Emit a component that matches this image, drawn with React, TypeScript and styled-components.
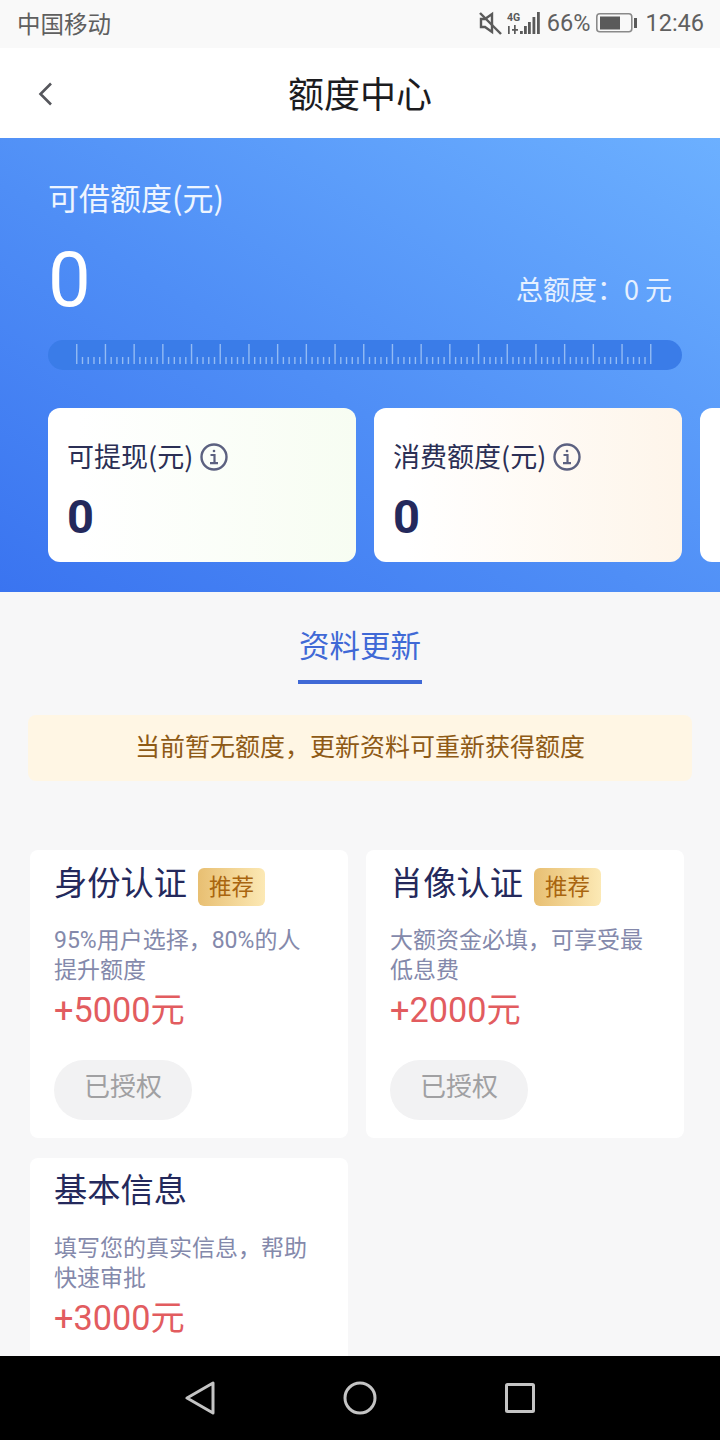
import React from "react";
import styled, { createGlobalStyle } from "styled-components";

const Global = createGlobalStyle`
  html, body { margin: 0; padding: 0; background: #f7f7f8; }
  body { font-family: "Noto Sans CJK SC", "Noto Sans", sans-serif; }
  * { box-sizing: border-box; }
`;
const Screen = styled.div`
  width: 720px; height: 1440px; display: flex; flex-direction: column; overflow: hidden; background: #f7f7f8;
`;
const StatusBar = styled.div`
  height: 48px; flex: none; display: flex; align-items: center; justify-content: space-between;
  padding: 0 16px 2px 17px; background: #f9f9f9; color: #5f5f5f; font-size: 23.5px;
`;
const StatusRight = styled.div`
  display: flex; align-items: center; font-family: Roboto, sans-serif; font-size: 23.5px; color: #606060;
`;
const Percent = styled.span` margin: 0 6px 0 4px; `;
const Header = styled.header`
  height: 90px; flex: none; background: #fff; display: flex; align-items: center; justify-content: center; position: relative;
  font-size: 36px; color: #1c1c1f; padding-bottom: 2px;
`;
const BackIcon = styled.svg` position: absolute; left: 36px; top: 34px; `;
const Hero = styled.section`
  height: 454px; flex: none; padding: 37px 0 0 48px; color: #fff; overflow: hidden;
  background: linear-gradient(to top right, #3a74f0 0%, #4f8ef6 45%, #6cb0ff 100%);
`;
const HeroLabel = styled.div` font-size: 31px; line-height: 44px; color: #eef5ff; `;
const HeroRow = styled.div`
  display: flex; justify-content: space-between; align-items: flex-end; padding-right: 48px; height: 88px; margin-top: 15px;
`;
const HeroAmount = styled.div` font-family: Roboto, sans-serif; font-size: 76px; line-height: 84px; font-weight: 400; `;
const HeroTotal = styled.div` font-size: 27px; line-height: 38px; color: #e6f0ff; margin-bottom: 14px; `;
const Ruler = styled.div`
  margin-top: 18px; margin-right: 38px; height: 30px; border-radius: 15px; background: #3a7ce8; overflow: hidden;
  display: flex; align-items: center; padding-left: 28px;
`;
const Cards = styled.div` display: flex; gap: 18px; margin-top: 38px; `;
const QuotaCard = styled.div<{ $tint: string }>`
  width: 308px; height: 154px; flex: none; border-radius: 12px; padding: 26px 19px 0;
  background: linear-gradient(to right, #fff 10%, ${p => p.$tint} 100%);
`;
const QuotaLabel = styled.div`
  display: flex; align-items: center; gap: 6px; font-size: 27px; line-height: 44px; color: #2b2f55;
`;
const QuotaValue = styled.div`
  font-family: Roboto, sans-serif; font-size: 47px; line-height: 52px; font-weight: 700; color: #24295c; margin-top: 13px;
`;
const Tabs = styled.div` flex: none; display: flex; justify-content: center; padding-top: 29px; `;
const Tab = styled.div`
  height: 63px; width: 124px; text-align: center; font-size: 30.5px; line-height: 46px; color: #4069d6; border-bottom: 4px solid #4069d6;
  white-space: nowrap;
`;
const Notice = styled.div`
  flex: none; height: 66px; margin: 31px 28px 0; border-radius: 8px; background: #fff6e4; color: #8e5a16;
  display: flex; align-items: center; justify-content: center; font-size: 25px; padding-bottom: 6px;
`;
const Grid = styled.div`
  flex: 1; min-height: 0; overflow: hidden; display: grid; grid-template-columns: 318px 318px; column-gap: 18px; row-gap: 20px;
  align-content: start; padding: 69px 0 0 30px;
`;
const AuthCard = styled.div`
  height: 288px; background: #fff; border-radius: 8px; padding: 13px 24px 0;
`;
const TitleRow = styled.div<{ $plain: boolean }>`
  display: flex; align-items: center; gap: 11px; height: 48px; margin-top: ${p => (p.$plain ? "-1px" : "0")};
  margin-bottom: ${p => (p.$plain ? "16px" : "0")};
`;
const Title = styled.div` font-size: 33.25px; line-height: 42px; color: #24295c; margin-top: -12px; `;
const Badge = styled.span`
  width: 67px; height: 38px; border-radius: 6px; display: flex; align-items: center; justify-content: center;
  font-size: 22.5px; padding-bottom: 5px; color: #a9650f; background: linear-gradient(to right, #e8bf72, #fce9b5);
`;
const Desc = styled.div`
  margin-top: 15px; font-family: Roboto, "Noto Sans CJK SC", sans-serif; font-size: 23px; line-height: 30px; color: #8489ab; width: 262px;
`;
const Reward = styled.div`
  font-family: Roboto, "Noto Sans CJK SC", sans-serif; font-size: 34.25px; line-height: 50px; color: #e25c5f; margin-top: -1px;
`;
const Authorized = styled.div`
  margin-top: 25px; width: 138px; height: 60px; border-radius: 30px; background: #f2f2f3; color: #a0a0a2;
  display: flex; align-items: center; justify-content: center; font-size: 26px; padding-bottom: 11px;
`;
const NavBar = styled.nav`
  height: 84px; flex: none; background: #000; display: flex; align-items: center; justify-content: center;
`;
const NavSlot = styled.div`
  width: 160px; display: flex; justify-content: center; align-items: center;
`;

const InfoIcon = () => (
  <svg width="30" height="30" viewBox="0 0 30 30" fill="none" stroke="#5c6180" strokeWidth="2.4" style={{ marginTop: 2 }}>
    <circle cx="15" cy="15" r="12.5" />
    <circle cx="15" cy="9" r="1.3" fill="#5c6180" stroke="none" />
    <path d="M11.5 13h4v8M11 21.2h8" strokeWidth="2.2" />
  </svg>
);

const ticks = Array.from({ length: 101 }, (_, i) => i);
const RulerTicks = () => (
  <svg width="580" height="24" viewBox="0 0 580 24">
    {ticks.map(i => {
      const h = i % 5 === 0 ? 20 : 7;
      const x = 0.75 + i * 5.74;
      return <line key={i} x1={x} x2={x} y1={21} y2={21 - h} stroke="#93bbf4" strokeWidth="1.4" />;
    })}
  </svg>
);

const auth = [
  { title: "身份认证", badge: true, desc: "95%用户选择，80%的人提升额度", reward: "+5000元", done: true },
  { title: "肖像认证", badge: true, desc: "大额资金必填，可享受最低息费", reward: "+2000元", done: true },
  { title: "基本信息", badge: false, desc: "填写您的真实信息，帮助快速审批", reward: "+3000元", done: false },
];

export default function App() {
  return (
    <Screen>
      <Global />
      <StatusBar>
        <span>中国移动</span>
        <StatusRight>
          <svg width="24" height="24" viewBox="0 0 24 24" fill="none" stroke="#5a5a5a" strokeWidth="2.4" style={{ marginRight: 2 }}>
            <path d="M2 8v8h4l7 5V3L6 8H2z" />
            <path d="M1 2l21 21" />
          </svg>
          <svg width="38" height="24" viewBox="0 0 38 24" fill="#5a5a5a">
            <text x="2" y="10" fontSize="10.5" fontWeight="700" fontFamily="Roboto, sans-serif">4G</text>
            <path d="M3 15h1.7v8H3zM7 18h6v1.7H7zM9 14h1.7v9H9z" />
            <rect x="15" y="20" width="2.8" height="3" />
            <rect x="19" y="15" width="2.8" height="8" />
            <rect x="23" y="11" width="2.8" height="12" />
            <rect x="27.5" y="6" width="2.8" height="17" />
            <rect x="32" y="1" width="2.8" height="22" />
          </svg>
          <Percent>66%</Percent>
          <svg width="41" height="20" viewBox="0 0 41 20" fill="none" style={{ marginRight: 8 }}>
            <rect x="0.8" y="0.8" width="35" height="18" rx="3" stroke="#8a8a8a" strokeWidth="1.6" />
            <rect x="4" y="3.5" width="20" height="13" fill="#5a5a5a" />
            <rect x="38" y="5" width="3" height="10" fill="#5a5a5a" />
          </svg>
          <span>12:46</span>
        </StatusRight>
      </StatusBar>
      <Header>
        <BackIcon width="20" height="24" viewBox="0 0 20 24" fill="none" stroke="#55565c" strokeWidth="2.6">
          <path d="M15 1.5L4.5 12 15 22.5" />
        </BackIcon>
        额度中心
      </Header>
      <Hero>
        <HeroLabel>可借额度(元)</HeroLabel>
        <HeroRow>
          <HeroAmount>0</HeroAmount>
          <HeroTotal>总额度：0 元</HeroTotal>
        </HeroRow>
        <Ruler><RulerTicks /></Ruler>
        <Cards>
          <QuotaCard $tint="#f7fdf2">
            <QuotaLabel>可提现(元)<InfoIcon /></QuotaLabel>
            <QuotaValue>0</QuotaValue>
          </QuotaCard>
          <QuotaCard $tint="#fef5ea">
            <QuotaLabel>消费额度(元)<InfoIcon /></QuotaLabel>
            <QuotaValue>0</QuotaValue>
          </QuotaCard>
          <QuotaCard $tint="#ffffff" />
        </Cards>
      </Hero>
      <Tabs><Tab>资料更新</Tab></Tabs>
      <Notice>当前暂无额度，更新资料可重新获得额度</Notice>
      <Grid>
        {auth.map(a => (
          <AuthCard key={a.title}>
            <TitleRow $plain={!a.badge}>
              <Title>{a.title}</Title>
              {a.badge && <Badge>推荐</Badge>}
            </TitleRow>
            <Desc>{a.desc}</Desc>
            <Reward>{a.reward}</Reward>
            {a.done && <Authorized>已授权</Authorized>}
          </AuthCard>
        ))}
      </Grid>
      <NavBar>
        <NavSlot>
          <svg width="30" height="34" viewBox="0 0 30 34" fill="none" stroke="#c4c4c4" strokeWidth="3" strokeLinejoin="round">
            <path d="M2 17L28 2v30z" />
          </svg>
        </NavSlot>
        <NavSlot>
          <svg width="34" height="34" viewBox="0 0 34 34" fill="none" stroke="#c4c4c4" strokeWidth="3">
            <circle cx="17" cy="17" r="15" />
          </svg>
        </NavSlot>
        <NavSlot>
          <svg width="30" height="30" viewBox="0 0 30 30" fill="none" stroke="#c4c4c4" strokeWidth="3" strokeLinejoin="round">
            <rect x="1.5" y="1.5" width="27" height="27" rx="1" />
          </svg>
        </NavSlot>
      </NavBar>
    </Screen>
  );
}
